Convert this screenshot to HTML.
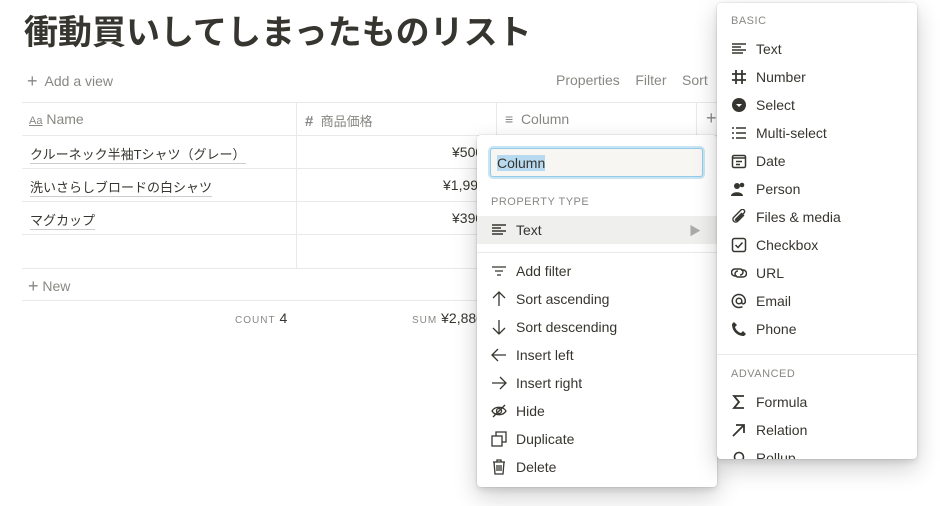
<!DOCTYPE html>
<html><head><meta charset="utf-8"><style>
*{margin:0;padding:0;box-sizing:border-box}
body{width:940px;height:506px;overflow:hidden;background:#fff;font-family:"Liberation Sans","Noto Sans CJK JP",sans-serif;color:#37352f;position:relative}
.a{position:absolute;white-space:nowrap}
.g{color:rgba(55,53,47,.6)}
.hl{position:absolute;background:#e9e9e7;height:1px}
.vl{position:absolute;background:#e9e9e7;width:1px}
.menu{position:absolute;background:#fff;border-radius:4px;box-shadow:0 0 0 1px rgba(15,15,15,.05),0 3px 6px rgba(15,15,15,.1),0 9px 24px rgba(15,15,15,.2)}
.it{position:absolute;left:0;right:0;height:28px;font-size:14px;display:flex;align-items:center}
.it svg{width:16px;height:16px;margin-right:9px;flex:none}
.cap{position:absolute;font-size:11px;letter-spacing:.5px;color:rgba(55,53,47,.6)}
.u{border-bottom:1px solid rgba(55,53,47,.25);padding-bottom:1px}
</style></head><body>
<div class="a" style="left:24px;top:5px;font-size:34px;font-weight:bold">衝動買いしてしまったものリスト</div>
<div class="a g" style="left:27px;top:71px;font-size:14px"><span style="font-size:18px;font-weight:300;vertical-align:-1px">+</span>&nbsp; Add a view</div>
<div class="a g" style="left:556px;top:72px;font-size:14px">Properties&nbsp;&nbsp;&nbsp; Filter&nbsp;&nbsp;&nbsp; Sort</div>

<div class="hl" style="left:22px;width:700px;top:102px"></div>
<div class="hl" style="left:22px;width:700px;top:135px"></div>
<div class="hl" style="left:22px;width:700px;top:168px"></div>
<div class="hl" style="left:22px;width:700px;top:201px"></div>
<div class="hl" style="left:22px;width:700px;top:234px"></div>
<div class="hl" style="left:22px;width:700px;top:268px"></div>
<div class="hl" style="left:22px;width:700px;top:300px"></div>
<div class="vl" style="left:296px;top:102px;height:166px"></div>
<div class="vl" style="left:496px;top:102px;height:166px"></div>
<div class="vl" style="left:696px;top:102px;height:33px"></div>

<div class="a g" style="left:29px;top:111px;font-size:14px"><span style="font-size:11px;text-decoration:underline">Aa</span> Name</div>
<div class="a g" style="left:305px;top:111px;font-size:13px"><span style="font-size:15px;font-weight:bold">#</span>&nbsp; 商品価格</div>
<div class="a g" style="left:505px;top:111px;font-size:14px">≡&nbsp; Column</div>
<div class="a g" style="left:706px;top:108px;font-size:18px">+</div>
<div class="a" style="left:30px;top:144px;font-size:13px"><span class="u">クルーネック半袖Tシャツ（グレー）</span></div>
<div class="a" style="left:30px;top:177px;font-size:13px"><span class="u">洗いさらしブロードの白シャツ</span></div>
<div class="a" style="left:30px;top:210px;font-size:13px"><span class="u">マグカップ</span></div>
<div class="a" style="left:452px;top:144px;font-size:14px">¥500</div>
<div class="a" style="left:443px;top:177px;font-size:14px">¥1,990</div>
<div class="a" style="left:452px;top:210px;font-size:14px">¥390</div>
<div class="a g" style="left:28px;top:276px;font-size:14px"><span style="font-size:18px;font-weight:300;vertical-align:-1px">+</span> New</div>
<div class="a" style="left:235px;top:310px;font-size:14px"><span class="g" style="font-size:10px;letter-spacing:1px">COUNT</span> 4</div>
<div class="a" style="left:412px;top:310px;font-size:14px"><span class="g" style="font-size:10px;letter-spacing:1px">SUM</span> ¥2,880</div>

<div class="menu" style="left:477px;top:135px;width:240px;height:352px">
 <div style="position:absolute;left:13px;top:13px;width:213px;height:29px;border:1px solid #94cbe8;box-shadow:0 0 0 2px rgba(148,203,232,.5);background:#f7f6f3;border-radius:3px;font-size:14px;padding:6px 6px"><span style="background:#b8daf0">Column</span></div>
 <div class="cap" style="left:14px;top:61px">PROPERTY TYPE</div>
 <div class="it" style="top:81px;background:#efefed;padding-left:14px"><svg viewBox="0 0 16 16" fill="none" stroke="#37352f" stroke-width="1.6"><path d="M1 3h14M1 6h9M1 9h14M1 12h11"/></svg>Text<span style="position:absolute;right:16px;color:#aaa;font-size:12px">▶</span></div>
 <div class="hl" style="left:0;right:0;top:117px"></div>
 <div class="it" style="top:122px;padding-left:14px"><svg viewBox="0 0 16 16" fill="none" stroke="#37352f" stroke-width="1.3"><path d="M1 4h14M4 8h8M6 12h4"/></svg>Add filter</div>
 <div class="it" style="top:150px;padding-left:14px"><svg viewBox="0 0 16 16" fill="none" stroke="#37352f" stroke-width="1.3"><path d="M8 15V1M2 7l6-6 6 6"/></svg>Sort ascending</div>
 <div class="it" style="top:178px;padding-left:14px"><svg viewBox="0 0 16 16" fill="none" stroke="#37352f" stroke-width="1.3"><path d="M8 1v14M2 9l6 6 6-6"/></svg>Sort descending</div>
 <div class="it" style="top:206px;padding-left:14px"><svg viewBox="0 0 16 16" fill="none" stroke="#37352f" stroke-width="1.3"><path d="M15 8H1M7 2L1 8l6 6"/></svg>Insert left</div>
 <div class="it" style="top:234px;padding-left:14px"><svg viewBox="0 0 16 16" fill="none" stroke="#37352f" stroke-width="1.3"><path d="M1 8h14M9 2l6 6-6 6"/></svg>Insert right</div>
 <div class="it" style="top:262px;padding-left:14px"><svg viewBox="0 0 16 16" fill="none" stroke="#37352f" stroke-width="1.3"><path d="M1 8c3-5 11-5 14 0c-3 5-11 5-14 0z"/><circle cx="8" cy="8" r="2.5"/><path d="M2 14L14 2"/></svg>Hide</div>
 <div class="it" style="top:290px;padding-left:14px"><svg viewBox="0 0 16 16" fill="none" stroke="#37352f" stroke-width="1.3"><rect x="1" y="5" width="10" height="10"/><path d="M5 5V1h10v10h-4"/></svg>Duplicate</div>
 <div class="it" style="top:318px;padding-left:14px"><svg viewBox="0 0 16 16" fill="none" stroke="#37352f" stroke-width="1.3"><path d="M2 3h12M6 3V1h4v2M3 3l1 12h8l1-12M6 6v6M8 6v6M10 6v6"/></svg>Delete</div>
</div>

<div class="menu" style="left:717px;top:3px;width:200px;height:456px;overflow:hidden">
 <div class="cap" style="left:14px;top:12px">BASIC</div>
 <div class="it" style="top:32px;padding-left:14px"><svg viewBox="0 0 16 16" fill="none" stroke="#37352f" stroke-width="1.6"><path d="M1 3h14M1 6h9M1 9h14M1 12h11"/></svg>Text</div>
 <div class="it" style="top:60px;padding-left:14px"><svg viewBox="0 0 16 16" fill="none" stroke="#37352f" stroke-width="1.8"><path d="M5 1v14M11 1v14M1 5h14M1 11h14"/></svg>Number</div>
 <div class="it" style="top:88px;padding-left:14px"><svg viewBox="0 0 16 16"><circle cx="8" cy="8" r="7" fill="#37352f"/><path d="M5 7l3 3 3-3z" fill="#fff"/></svg>Select</div>
 <div class="it" style="top:116px;padding-left:14px"><svg viewBox="0 0 16 16" fill="none" stroke="#37352f" stroke-width="1.4"><path d="M1 3h2M1 8h2M1 13h2M5 3h10M5 8h10M5 13h10"/></svg>Multi-select</div>
 <div class="it" style="top:144px;padding-left:14px"><svg viewBox="0 0 16 16" fill="none" stroke="#37352f" stroke-width="1.5"><rect x="1.5" y="2.5" width="13" height="12" rx="1.5"/><path d="M1.5 5h13M5 8.5h6M5 11.5h4"/></svg>Date</div>
 <div class="it" style="top:172px;padding-left:14px"><svg viewBox="0 0 16 16" fill="#37352f"><circle cx="6" cy="5" r="3"/><path d="M0 15c0-5 12-5 12 0z"/><circle cx="11" cy="4" r="2.3"/></svg>Person</div>
 <div class="it" style="top:200px;padding-left:14px"><svg viewBox="0 0 16 16" fill="none" stroke="#37352f" stroke-width="1.4"><path d="M13 6l-6 6c-3 3-7-1-4-4l7-7c2-2 5 1 3 3l-7 7c-1 1-2 0-1-1l6-6"/></svg>Files &amp; media</div>
 <div class="it" style="top:228px;padding-left:14px"><svg viewBox="0 0 16 16" fill="none" stroke="#37352f" stroke-width="1.5"><rect x="1.5" y="1.5" width="13" height="13" rx="2"/><path d="M4.5 8l2.5 2.5 4.5-5"/></svg>Checkbox</div>
 <div class="it" style="top:256px;padding-left:14px"><svg viewBox="0 0 16 16" fill="none" stroke="#37352f" stroke-width="1.5"><path d="M6 11H4a3.5 3.5 0 010-7h5a3 3 0 010 6M10 5h2a3.5 3.5 0 010 7H7a3 3 0 010-6"/></svg>URL</div>
 <div class="it" style="top:284px;padding-left:14px"><svg viewBox="0 0 16 16" fill="none" stroke="#37352f" stroke-width="1.5"><circle cx="8" cy="8" r="2.8"/><path d="M10.8 8v1.5c0 2 3.5 2 3.5-1.5A6.5 6.5 0 108 14.5c1.5 0 2.5-.3 3.5-.8"/></svg>Email</div>
 <div class="it" style="top:312px;padding-left:14px"><svg viewBox="0 0 16 16" fill="#37352f"><path d="M3 1l3 3-2 2c1 3 3 5 6 6l2-2 3 3-2 2C6 15 1 10 1 3z"/></svg>Phone</div>
 <div class="hl" style="left:0;right:0;top:351px"></div>
 <div class="cap" style="left:14px;top:365px">ADVANCED</div>
 <div class="it" style="top:385px;padding-left:14px"><svg viewBox="0 0 16 16" fill="none" stroke="#37352f" stroke-width="1.8"><path d="M13 2H3l5 6-5 6h10"/></svg>Formula</div>
 <div class="it" style="top:413px;padding-left:14px"><svg viewBox="0 0 16 16" fill="none" stroke="#37352f" stroke-width="1.8"><path d="M2 14L13 3M5 3h8v8"/></svg>Relation</div>
 <div class="it" style="top:441px;padding-left:14px"><svg viewBox="0 0 16 16" fill="none" stroke="#37352f" stroke-width="1.6"><circle cx="8" cy="7" r="4.5"/></svg>Rollup</div>
</div>
</body></html>
